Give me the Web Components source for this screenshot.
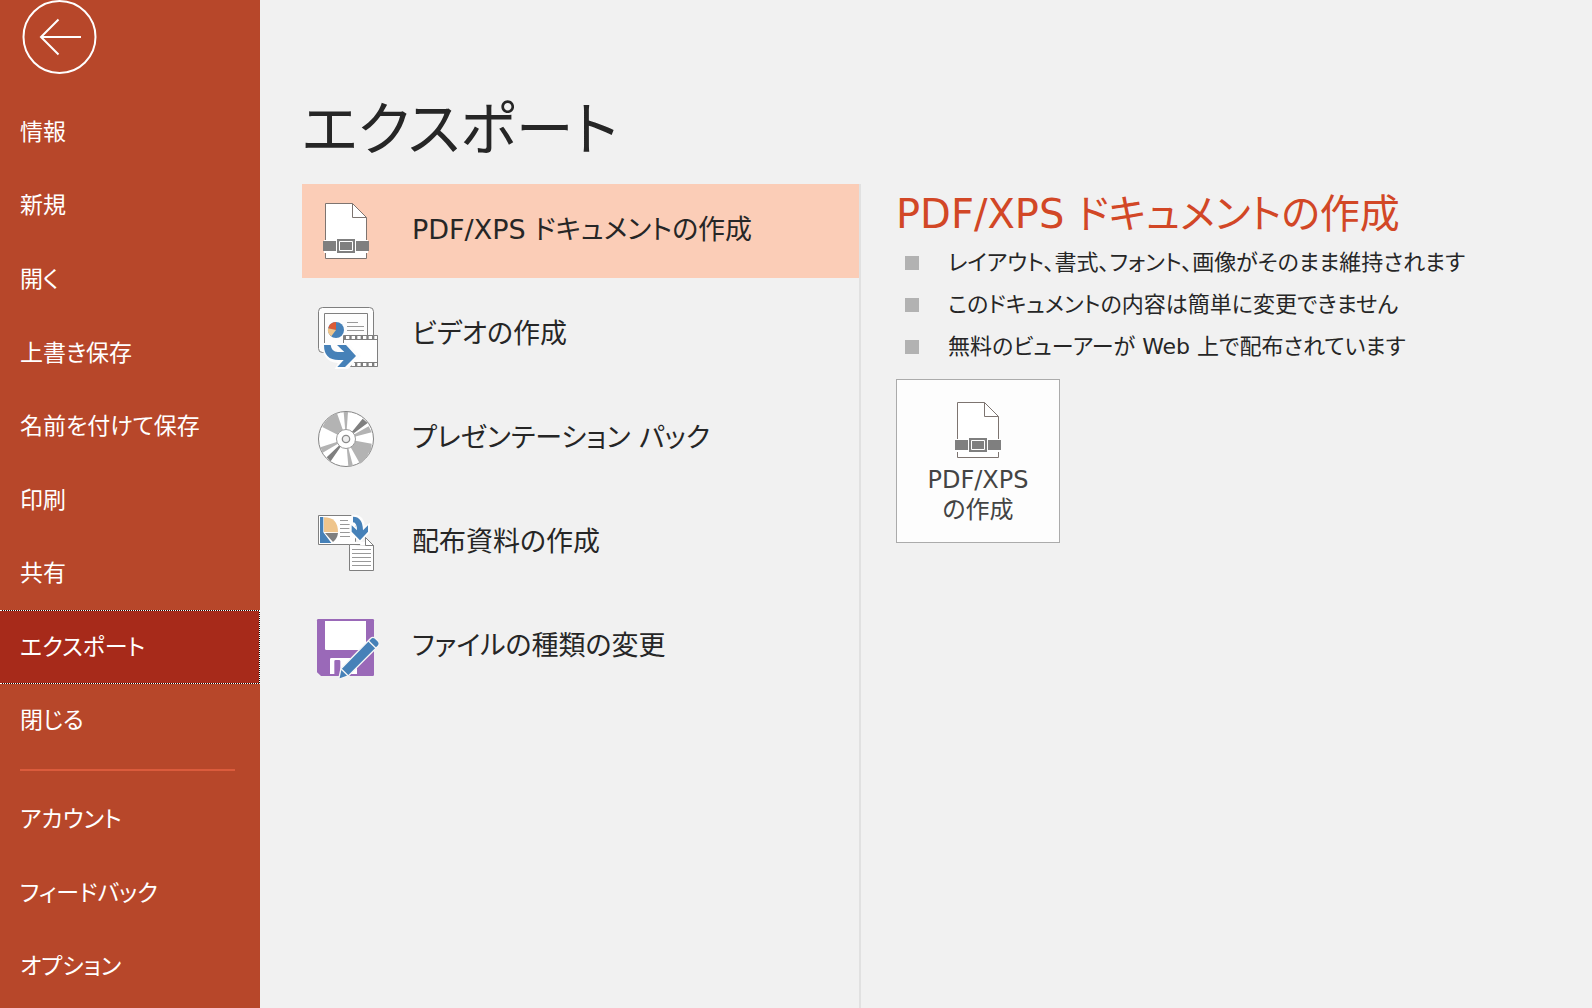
<!DOCTYPE html>
<html lang="ja">
<head>
<meta charset="utf-8">
<title>エクスポート</title>
<style>
  body { margin: 0; background: #f1f1f1; color: #262626; font-family: "DejaVu Sans", "Noto Sans CJK JP", sans-serif; font-feature-settings: "palt"; font-weight: 400; }
</style>
</head>
<body>
<backstage-view></backstage-view>

<script>
const docIcon = (size) => `<svg width="${size}" height="${size}" viewBox="0 0 ${size} ${size}" aria-hidden="true">
  <path d="M9.5 2.5h27l14 14v41h-41z" fill="#fff" stroke="#7d7470"/>
  <path d="M36.5 2.5v14h14" fill="none" stroke="#7d7470"/>
  <path d="M8 39h44v13H8z" fill="#fff"/>
  <path d="M7 40h13v10H7zM40 40h13v10H40z" fill="#7f7f7f"/>
  <path d="M21 38h18v14H21z" fill="#7f7f7f"/>
  <path d="M23.500 40.500h13v9h-13z" fill="#7f7f7f" stroke="#fff"/>
</svg>`;

const icons = {
  document: docIcon(64),
  video: `<svg width="64" height="64" viewBox="48 45 192 192" aria-hidden="true">
    <rect x="55.500" y="52.500" width="165" height="135" rx="12" fill="#fdfdfd" stroke="#7f7f7f" stroke-width="3"/>
    <path d="M73.500 187V70.500h129V135" fill="none" stroke="#7f7f7f" stroke-width="3"/>
    <path d="M141 97.500h33M141 109.500h51M141 121.500h51" stroke="#9a9a9a" stroke-width="3"/>
    <circle cx="108" cy="120" r="24" fill="#4681b8"/>
    <path d="M108 120V96a24 24 0 0 0-23 19z" fill="#dc5b35"/>
    <path d="M108 120L84 115a24 24 0 0 0 10 24z" fill="#f0c48a"/>
    <path d="M130.500 136.500h102v93h-102z" fill="#fff" stroke="#7f7f7f" stroke-width="3"/>
    <path d="M132 142.500h100M132 223.500h100" stroke="#7f7f7f" stroke-width="15"/>
    <path d="M138 142.500h93M138 223.500h93" stroke="#fff" stroke-width="9" stroke-dasharray="10 7"/>
    <path d="M66 159h33q4 17 14 20l-12-20h41l39 39-37 39h-40l10-18q-48-3-48-60z" fill="#fdfdfd"/>
    <path d="M72 165h20q3 21 21 21h20l-22-21h27l30 33-33 33h-23l19-21h-15q-44 0-44-45z" fill="#4681b8"/>
  </svg>`,
  disc: `<svg width="64" height="64" viewBox="48 42 192 192" aria-hidden="true">
    <circle cx="138" cy="132" r="82.500" fill="#fff" stroke="#858585" stroke-width="3"/>
    <g fill="#b3b3b3">
      <path d="M138 132L67 96Q81 64 111 55z"/><path d="M138 132L131 51H144z"/>
      <path d="M138 132L209 168Q195 200 180 206z"/><path d="M138 132L145 213H159z"/>
      <path d="M138 132L206 94L215 112z"/><path d="M138 132L61 157L68 173z"/>
      <path d="M138 132L215 146Q216 162 209 172z"/>
    </g>
    <path d="M138 132L188 71L203 84zM138 132L80 187L92 199z" fill="#7f7f7f"/>
    <circle cx="138" cy="132" r="28.500" fill="#fff" stroke="#999" stroke-width="3"/>
    <circle cx="138" cy="132" r="11" fill="#eee" stroke="#8b8b8b" stroke-width="4"/>
  </svg>`,
  handout: `<svg width="64" height="64" viewBox="48 39 192 192" aria-hidden="true">
    <path d="M55.500 46.500h111v87h-111z" fill="#fff" stroke="#7f7f7f" stroke-width="3"/>
    <path d="M60 51h10v46l24 32H60z" fill="#4681b8"/>
    <path d="M72 96V52q42 0 42 45z" fill="#efc58c"/>
    <path d="M75 99h39q-2 17-15 27z" fill="#7f7f7f"/>
    <path d="M120 61.500h24M120 73.500h30M120 85.500h30M120 97.500h36M120 109.500h30" stroke="#999" stroke-width="3"/>
    <path d="M148.500 136.500V211.500h72v-75l-24-24v24z" fill="#fff" stroke="#7f7f7f" stroke-width="3"/>
    <path d="M148.500 138V125h48v12z" fill="#fff"/>
    <path d="M148.500 140v-6.500h32M196.500 112.500v24h24z" fill="#fff" stroke="#7f7f7f" stroke-width="3"/>
    <path d="M156 148.500h57M156 160.500h57M156 172.500h57M156 184.500h57M156 196.500h57" stroke="#999" stroke-width="3"/>
    <path d="M154 44h14q26 5 26 34l16-10v28l-30 32-32-32V73l18 8q0-13-12-13z" fill="#fdfdfd"/>
    <path d="M159 50q29 0 30 41l15-15v19l-24 26-25-26V76l16 15q0-23-12-24z" fill="#4681b8"/>
  </svg>`,
  save: `<svg width="64" height="64" viewBox="48 36 192 192" aria-hidden="true">
    <path d="M55 42h163q4 0 4 4v163q0 4-4 4H63L51 202V46q0-4 4-4z" fill="#9a69b8"/>
    <path d="M75 48h123v83q0 4-4 4H79q-4 0-4-4z" fill="#fff"/>
    <path d="M90 207v-44q0-4 4-4h73q4 0 4 4v44h-50v-38q0-4-4-4h-10q-4 0-4 4v38z" fill="#fff"/>
    <path d="M116 223l7-32 88-90q7-7 15-1l9 9q6 7-1 15l-89 89z" fill="#4681b8" stroke="#f6f6f6" stroke-width="4"/>
    <path d="M123 191l22 22M205 107l23 23" stroke="#f6f6f6" stroke-width="4"/>
  </svg>`
};

/* Base class: clones a template into an open shadow root. */
class TemplateElement extends HTMLElement {
  constructor() {
    super();
    const t = document.createElement('template');
    t.innerHTML = this.markup();
    this.attachShadow({ mode: 'open' }).appendChild(t.content.cloneNode(true));
  }
}

class NavItem extends TemplateElement {
  markup() {
    return `<style>
      :host { display: flex; flex: 1; min-height: 48px; }
      button { flex: 1; margin: 0; padding: 0 20px; border: 0; background: none; color: #fff; font: inherit; font-size: 23px; line-height: 32px; font-feature-settings: inherit; text-align: left; white-space: nowrap; }
      :host([selected]) button { border: 1px dotted #fff; border-left: 0; background: linear-gradient(#a72a1a, #a72a1a) padding-box, #1a0805 border-box; }
    </style><button type="button"><slot></slot></button>`;
  }
}

class BackstageNav extends TemplateElement {
  markup() {
    return `<style>
      :host { display: flex; flex-direction: column; box-sizing: border-box; min-height: 100vh; padding-bottom: 5px; background: #b7472a; }
      .back { width: 76px; height: 76px; margin: 0 0 19px 22px; padding: 0; border: 0; background: none; }
      svg { display: block; }
      nav { display: flex; flex-direction: column; flex: 1; }
      hr { box-sizing: border-box; width: 215px; height: 2px; margin: 12px 0 11px 20px; border: 0; background: #db5b3c; }
    </style>
    <button class="back" type="button" aria-label="戻る"><svg width="76" height="76" viewBox="0 0 76 76" fill="none" stroke="#fff" stroke-width="2"><circle cx="37.500" cy="37" r="36"/><path d="M59 37H19M36.500 19.500L19 37l17.500 17.500"/></svg></button>
    <nav>
      <nav-item>情報</nav-item><nav-item>新規</nav-item><nav-item>開く</nav-item>
      <nav-item>上書き保存</nav-item><nav-item>名前を付けて保存</nav-item><nav-item>印刷</nav-item>
      <nav-item>共有</nav-item><nav-item selected>エクスポート</nav-item><nav-item>閉じる</nav-item>
      <hr>
      <nav-item>アカウント</nav-item><nav-item>フィードバック</nav-item><nav-item>オプション</nav-item>
    </nav>`;
  }
}

class ExportOption extends TemplateElement {
  markup() {
    return `<style>
      :host { display: block; }
      button { display: flex; align-items: center; gap: 32px; width: 100%; height: 94px; margin: 0; padding: 4px 14px 0; border: 0; background: none; color: inherit; font: inherit; font-size: 27px; line-height: 40px; font-feature-settings: inherit; text-align: left; white-space: nowrap; }
      :host([selected]) button { background: #fbcdb7; }
      .icon, svg { display: block; }
      .label { padding-bottom: 6px; }
    </style><button type="button"><span class="icon"></span><span class="label"><slot></slot></span></button>`;
  }
  connectedCallback() {
    this.shadowRoot.querySelector('.icon').innerHTML = icons[this.getAttribute('icon')];
  }
}

class ExportDetail extends TemplateElement {
  markup() {
    return `<style>
      :host { display: block; }
      h2 { margin: 0; color: #d24726; font-size: 40px; line-height: 56px; font-weight: 400; white-space: nowrap; }
      ul { margin: 0; padding: 0; list-style: none; }
      li { display: flex; align-items: center; gap: 29px; padding-left: 9px; font-size: 22px; line-height: 42px; white-space: nowrap; }
      li::before { content: ""; width: 14px; height: 14px; background: #b2b2b2; }
      button { display: flex; flex-direction: column; align-items: center; box-sizing: border-box; width: 164px; height: 164px; margin: 11px 0 0; padding: 20px 0 0; border: 1px solid #ababab; background: #fdfdfd; color: #444; font: inherit; font-size: 24px; line-height: 30px; font-feature-settings: inherit; }
      svg { display: block; margin-bottom: 5px; }
    </style>
    <h2>PDF/XPS ドキュメントの作成</h2>
    <ul><li>レイアウト、書式、フォント、画像がそのまま維持されます</li><li>このドキュメントの内容は簡単に変更できません</li><li>無料のビューアーが Web 上で配布されています</li></ul>
    <button type="button">${docIcon(60)}<span>PDF/XPS</span><span>の作成</span></button>`;
  }
}

class BackstageView extends TemplateElement {
  markup() {
    return `<style>
      :host { display: grid; grid-template-columns: 260px minmax(0, 1fr); min-height: 100vh; }
      main { display: flex; flex-direction: column; padding-left: 42px; }
      h1 { margin: 0; padding-top: 80px; font-size: 58px; line-height: 100px; font-weight: 400; white-space: nowrap; }
      .panes { display: grid; grid-template-columns: 559px minmax(0, 1fr); flex: 1; margin-top: 4px; }
      .options { display: flex; flex-direction: column; gap: 10px; border-right: 2px solid #e1e1e1; }
      export-detail { padding: 2px 0 0 35px; }
    </style>
    <backstage-nav></backstage-nav>
    <main>
      <h1>エクスポート</h1>
      <div class="panes">
        <div class="options">
          <export-option icon="document" selected>PDF/XPS ドキュメントの作成</export-option>
          <export-option icon="video">ビデオの作成</export-option>
          <export-option icon="disc">プレゼンテーション パック</export-option>
          <export-option icon="handout">配布資料の作成</export-option>
          <export-option icon="save">ファイルの種類の変更</export-option>
        </div>
        <export-detail></export-detail>
      </div>
    </main>`;
  }
}

customElements.define('nav-item', NavItem);
customElements.define('backstage-nav', BackstageNav);
customElements.define('export-option', ExportOption);
customElements.define('export-detail', ExportDetail);
customElements.define('backstage-view', BackstageView);
</script>
</body>
</html>
